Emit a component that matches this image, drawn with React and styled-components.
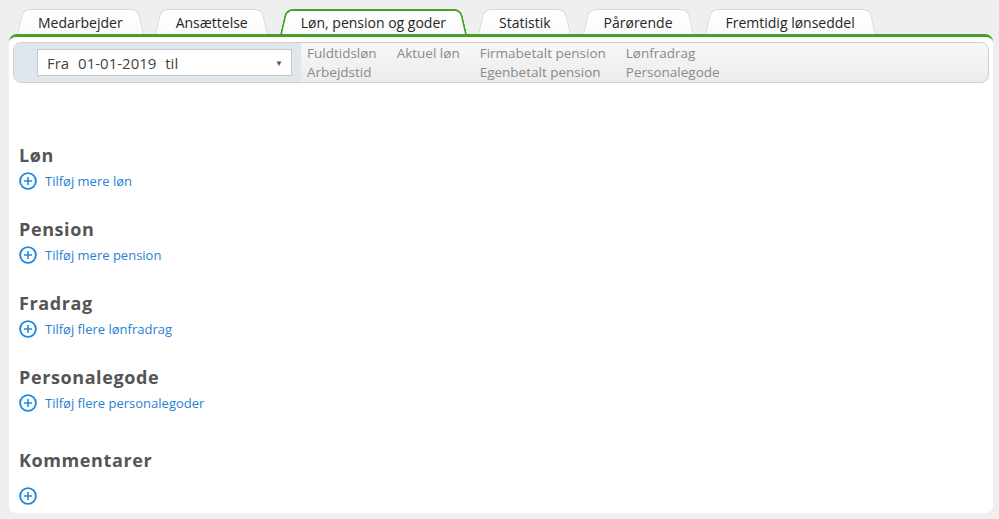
import React from 'react'
import styled, { createGlobalStyle } from 'styled-components'

const green = '#47a02a'

const Global = createGlobalStyle`
  body {
    margin: 0;
    background: #efefef;
    font-family: 'Open Sans', 'Liberation Sans', Arial, sans-serif;
  }
`

const Page = styled.div`
  width: 999px;
  height: 519px;
  overflow: hidden;
`

const Tabs = styled.div`
  display: flex;
  gap: 11px;
  padding: 9px 0 0 17px;
  height: 25px;
`

const Tab = styled.div`
  position: relative;
  z-index: 0;
  height: 25px;
  line-height: 27px;
  padding: 0 21px;
  font-size: 14px;
  color: #262626;
  white-space: nowrap;
  &::before,
  &::after {
    content: '';
    position: absolute;
    top: 0;
    bottom: 0;
    z-index: -1;
    background: linear-gradient(#ffffff, #fafafa);
    border: ${p => (p.$active ? `2px solid ${green}` : '1px solid #d8d8d8')};
    border-bottom: none;
  }
  &::before {
    left: 0;
    right: 40%;
    border-right: none;
    border-radius: 7px 0 0 0;
    transform: skewX(-13deg);
    transform-origin: bottom left;
  }
  &::after {
    right: 0;
    left: 40%;
    border-left: none;
    border-radius: 0 7px 0 0;
    transform: skewX(13deg);
    transform-origin: bottom right;
  }
`

const Panel = styled.div`
  margin-left: 9px;
  width: 984px;
  height: 479px;
  box-sizing: border-box;
  background: #fff;
  border-top: 3px solid ${green};
  border-radius: 8px 8px 7px 7px;
  padding: 5px 4px 0;
`

const FilterBar = styled.div`
  display: flex;
  height: 41px;
  box-sizing: border-box;
  border: 1px solid #cfcfcf;
  border-radius: 8px;
  overflow: hidden;
  background: linear-gradient(#f7f7f7, #ececec);
`

const PeriodBox = styled.div`
  width: 287px;
  flex-shrink: 0;
  background: #dfe6ec;
  padding: 6px 9px 0 23px;
  box-sizing: border-box;
`

const Select = styled.div`
  height: 27px;
  box-sizing: border-box;
  background: #fff;
  border: 1px solid #c9c9c9;
  display: flex;
  align-items: center;
  justify-content: space-between;
  padding: 0 8px 0 9px;
  font-size: 15px;
  color: #444;
  word-spacing: 5px;
  span {
    font-size: 8px;
    color: #555;
  }
`

const Summary = styled.div`
  display: flex;
  gap: 20px;
  padding: 1px 0 0 6px;
  font-size: 13.5px;
  line-height: 19px;
  color: #8a8a8a;
`

const SummaryCol = styled.div`
  display: flex;
  flex-direction: column;
`

const Content = styled.div`
  padding: 61px 0 0 6px;
`

const Section = styled.div`
  margin-bottom: ${p => p.$gap || 27}px;
`

const Heading = styled.h3`
  margin: 0 0 ${p => p.$after || 5}px;
  font-size: 18px;
  line-height: 22px;
  font-weight: 700;
  letter-spacing: 0.6px;
  color: #555;
`

const AddLink = styled.a`
  display: flex;
  align-items: center;
  gap: 8px;
  height: 20px;
  font-size: 13px;
  color: #2a7fd4;
  text-decoration: none;
  cursor: pointer;
`

const PlusIcon = () => (
  <svg width="18" height="18" viewBox="0 0 18 18">
    <circle cx="9" cy="9" r="7.9" fill="none" stroke="#1e8ae0" strokeWidth="1.9" />
    <path d="M9 5v8M5 9h8" stroke="#1e8ae0" strokeWidth="1.6" />
  </svg>
)

const tabs = [
  'Medarbejder',
  'Ansættelse',
  'Løn, pension og goder',
  'Statistik',
  'Pårørende',
  'Fremtidig lønseddel'
]

const sections = [
  { title: 'Løn', link: 'Tilføj mere løn' },
  { title: 'Pension', link: 'Tilføj mere pension' },
  { title: 'Fradrag', link: 'Tilføj flere lønfradrag' },
  { title: 'Personalegode', link: 'Tilføj flere personalegoder' }
]

export default function App() {
  return (
    <Page>
      <Global />
      <Tabs>
        {tabs.map((t, i) => (
          <Tab key={t} $active={i === 2}>
            {t}
          </Tab>
        ))}
      </Tabs>
      <Panel>
        <FilterBar>
          <PeriodBox>
            <Select>
              Fra 01-01-2019 til
              <span>▼</span>
            </Select>
          </PeriodBox>
          <Summary>
            <SummaryCol>
              <div>Fuldtidsløn</div>
              <div>Arbejdstid</div>
            </SummaryCol>
            <SummaryCol>
              <div>Aktuel løn</div>
            </SummaryCol>
            <SummaryCol>
              <div>Firmabetalt pension</div>
              <div>Egenbetalt pension</div>
            </SummaryCol>
            <SummaryCol>
              <div>Lønfradrag</div>
              <div>Personalegode</div>
            </SummaryCol>
          </Summary>
        </FilterBar>
        <Content>
          {sections.map((s, i) => (
            <Section key={s.title} $gap={i === sections.length - 1 ? 36 : 27}>
              <Heading>{s.title}</Heading>
              <AddLink>
                <PlusIcon />
                {s.link}
              </AddLink>
            </Section>
          ))}
          <Section>
            <Heading $after={15}>Kommentarer</Heading>
            <AddLink>
              <PlusIcon />
            </AddLink>
          </Section>
        </Content>
      </Panel>
    </Page>
  )
}
